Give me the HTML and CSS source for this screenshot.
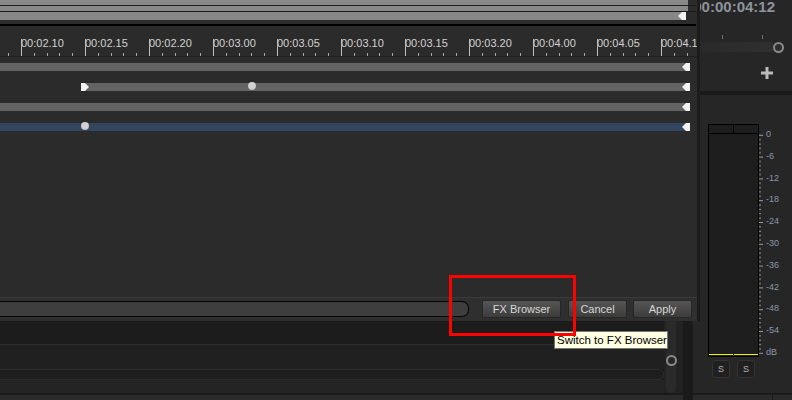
FILE: index.html
```html
<!DOCTYPE html>
<html>
<head>
<meta charset="utf-8">
<link rel="stylesheet" href="styles.css">
</head>
<body>
<div class="app">
  <div class="lanes">
    <div class="lane-a"></div>
    <div class="lane-b"></div>
    <div class="lane-field"></div>
    <div class="lane-d"></div>
    <div class="foot"></div>
  </div>
  <div class="vcol">
    <div class="vtrack"><span class="vknob"></span></div>
    <div class="foot"></div>
  </div>
  <div class="strip"></div>
  <aside class="panel">
    <div class="tc">00:00:04:12</div>
    <div class="sticks"><i></i><i></i></div>
    <div class="strack"><div class="sbar"></div><div class="sknob"></div></div>
    <div class="plusrow">
      <svg width="12" height="12" viewBox="0 0 12 12"><rect x="0" y="4.5" width="12" height="3" fill="#bababa"/><rect x="4.5" y="0" width="3" height="12" fill="#bababa"/></svg>
    </div>
    <div class="pband"></div>
    <div class="meterwrap">
      <div class="meterrow">
        <div class="meter">
          <div class="mhead"><span></span><span></span></div>
          <div class="mbody"><div class="ch"><i></i></div><div class="ch"><i></i></div></div>
        </div>
        <svg class="mticks" width="5" height="233" viewBox="0 0 5 233">
          <defs>
            <pattern id="mt" x="0" y="10.8" width="5" height="21.8" patternUnits="userSpaceOnUse">
              <rect x="0" y="0" width="4" height="1" fill="#9a9a9a"/>
              <rect x="0" y="4.36" width="2" height="1" fill="#9a9a9a"/>
              <rect x="0" y="8.72" width="2" height="1" fill="#9a9a9a"/>
              <rect x="0" y="13.08" width="2" height="1" fill="#9a9a9a"/>
              <rect x="0" y="17.44" width="2" height="1" fill="#9a9a9a"/>
            </pattern>
          </defs>
          <rect x="0" y="8" width="5" height="222" fill="url(#mt)"/>
        </svg>
        <div class="mlabels">
          <span>0</span><span>-6</span><span>-12</span><span>-18</span><span>-24</span><span>-30</span><span>-36</span><span>-42</span><span>-48</span><span>-54</span><span>dB</span>
        </div>
      </div>
      <div class="solo"><button class="sbtn">S</button><button class="sbtn">S</button></div>
    </div>
    <div class="pfoot"></div>
  </aside>
</div>

<div class="dialog">
  <div class="bands">
    <div class="band b5"></div>
    <div class="bline"></div>
    <div class="band b5"></div>
    <div class="bline"></div>
    <div class="band b8">
      <svg class="endmark" width="8" height="8" viewBox="0 0 8 8"><polygon points="0,4 4,0 8,0 8,8 4,8" fill="#f2f2f2"/></svg>
    </div>
    <div class="bgap"></div>
    <div class="bblack"></div>
  </div>
  <div class="ruler">
    <svg class="rticks" width="697" height="30" viewBox="0 0 697 30">
      <defs>
        <pattern id="rt" x="21" y="0" width="64" height="30" patternUnits="userSpaceOnUse">
          <rect x="0" y="13" width="1" height="17" fill="#bdbdbd"/>
          <rect x="13" y="27" width="1" height="3" fill="#a8a8a8"/>
          <rect x="26" y="27" width="1" height="3" fill="#a8a8a8"/>
          <rect x="38" y="27" width="1" height="3" fill="#a8a8a8"/>
          <rect x="51" y="27" width="1" height="3" fill="#a8a8a8"/>
        </pattern>
      </defs>
      <rect x="0" y="0" width="697" height="30" fill="url(#rt)"/>
    </svg>
    <div class="labels">
      <span>00:02.10</span><span>00:02.15</span><span>00:02.20</span><span>00:03.00</span><span>00:03.05</span><span>00:03.10</span><span>00:03.15</span><span>00:03.20</span><span>00:04.00</span><span>00:04.05</span><span>00:04.10</span>
    </div>
  </div>
  <div class="tracks">
    <div class="bar">
      <svg class="endmark" width="8" height="8" viewBox="0 0 8 8"><polygon points="0,4 4,0 8,0 8,8 4,8" fill="#f2f2f2"/></svg>
    </div>
    <div class="bar short">
      <svg class="startmark" width="8" height="8" viewBox="0 0 8 8"><polygon points="0,0 4,0 8,4 4,8 0,8" fill="#f2f2f2"/></svg>
      <span class="kf" style="left:167px"></span>
      <svg class="endmark" width="8" height="8" viewBox="0 0 8 8"><polygon points="0,4 4,0 8,0 8,8 4,8" fill="#f2f2f2"/></svg>
    </div>
    <div class="bar">
      <svg class="endmark" width="8" height="8" viewBox="0 0 8 8"><polygon points="0,4 4,0 8,0 8,8 4,8" fill="#f2f2f2"/></svg>
    </div>
    <div class="bar blue">
      <span class="kf" style="left:81px"></span>
      <svg class="endmark" width="8" height="8" viewBox="0 0 8 8"><polygon points="0,4 4,0 8,0 8,8 4,8" fill="#f2f2f2"/></svg>
    </div>
  </div>
  <div class="bottombar">
    <div class="input"></div>
    <button class="btn fx">FX Browser</button>
    <button class="btn cancel">Cancel</button>
    <button class="btn apply">Apply</button>
  </div>
</div>

<div class="tooltip">Switch to FX Browser</div>
<div class="callout"></div>
</body>
</html>
```

FILE: styles.css
```css
* { box-sizing: border-box; margin: 0; padding: 0; }
html, body { width: 792px; height: 400px; overflow: hidden; }
body {
  background: #1c1c1c;
  font-family: "Liberation Sans", Arial, sans-serif;
  position: relative;
}

/* ---------- application underneath ---------- */
.app { display: flex; width: 792px; height: 400px; }

.lanes { width: 664px; display: flex; flex-direction: column; }
.lane-a { height: 345px; background: #1c1c1c; border-bottom: 1px solid #2e2e2e; }
.lane-b { height: 24px; background: #202020; }
.lane-field {
  height: 11px; background: #1e1e1e;
  border: 1px solid #2c2c2c; border-left: none;
  border-radius: 0 6px 6px 0;
}
.lane-d { height: 13px; background: #242424; }
.foot { height: 7px; background: #2a2a2a; border-top: 2px solid #1a1a1a; }

.vcol { width: 19px; background: #222; display: flex; flex-direction: column; }
.vtrack {
  flex: 1; margin: 0 7px 0 2px; background: #2a2a2a;
  border-radius: 0 0 5px 5px;
  display: flex; flex-direction: column; justify-content: flex-end; align-items: center;
  padding-bottom: 27px;
}
.vknob {
  display: block; width: 11px; height: 11px; border-radius: 50%;
  border: 2.5px solid #8a8a8a; background: #262626;
}
.strip { width: 10px; background: #1a1a1a; }

/* ---------- right panel ---------- */
.panel { width: 99px; background: #262626; display: flex; flex-direction: column; }
.tc {
  height: 33px; text-align: right; padding-right: 17px;
  font-weight: bold; font-size: 15px; line-height: 14px;
  color: #8d939a; white-space: nowrap;
}
.sticks { height: 9px; display: flex; gap: 39px; padding: 2px 0 0 29px; }
.sticks i { display: block; width: 1px; height: 4px; background: #707070; }
.strack { height: 10px; display: flex; align-items: center; }
.sbar { width: 80px; height: 10px; background: linear-gradient(to right, #292929, #303030); }
.sknob {
  width: 11px; height: 11px; border-radius: 50%;
  border: 2.5px solid #8a8a8a; background: #2e2e2e;
}
.plusrow { height: 39px; padding: 15px 0 0 68px; }
.plusrow svg { display: block; }
.pband { height: 4px; background: #1a1a1a; }

.meterwrap { flex: 1; padding: 29px 0 0 15px; display: flex; flex-direction: column; }
.meterrow { display: flex; height: 233px; }
.meter {
  width: 51px; height: 233px; border: 1px solid #000; background: #1e1e1e;
  display: flex; flex-direction: column;
}
.mhead { height: 9px; border-bottom: 1px solid #000; display: flex; }
.mhead span { flex: 1; }
.mhead span:first-child { flex: none; width: 25px; border-right: 1px solid #000; }
.mbody { flex: 1; display: flex; gap: 1px; padding-bottom: 1px; }
.ch { flex: 1; display: flex; flex-direction: column; justify-content: flex-end; }
.ch i { display: block; height: 1px; background: #f0f000; }
.mticks { display: block; }
.mlabels {
  margin-left: 2px; display: flex; flex-direction: column;
  font-size: 9px; line-height: 21.8px; color: #8a97aa;
}
.solo { display: flex; gap: 7px; padding-left: 4px; margin-top: 3px; }
.sbtn {
  width: 18px; height: 18px; border: 1px solid #333; border-radius: 3px;
  background: #202020; color: #b4b4b4;
  font-family: "Liberation Sans", Arial, sans-serif; font-size: 9px;
  display: flex; align-items: center; justify-content: center;
}
.pfoot {
  height: 7px; border-top: 2px solid #1a1a1a;
  background: linear-gradient(to right, #2a2a2a 79px, #1a1a1a 79px 80px, #2a2a2a 80px);
}

/* ---------- floating dialog ---------- */
.dialog {
  position: absolute; left: 0; top: 0;
  width: 700px; height: 321px;
  background: #2b2b2b; border-right: 3px solid #1c1c1c;
  display: flex; flex-direction: column; overflow: hidden;
}
.bands { height: 26px; display: flex; flex-direction: column; }
.band { background: #898989; width: 688px; position: relative; }
.b5 { height: 5px; }
.b8 { height: 8px; width: 686px; background: #878787; }
.bline { height: 1px; width: 696px; background: #1c1c1c; }
.bgap { height: 4px; }
.bblack { height: 2px; width: 696px; background: #000; }

.endmark { position: absolute; right: 0; top: 0; display: block; }
.startmark { position: absolute; left: 0; top: 0; display: block; }

.ruler {
  height: 31px; position: relative; overflow: hidden;
  border-bottom: 1px solid #1f1f1f; padding-top: 11px;
}
.rticks { position: absolute; left: 0; top: 0; display: block; }
.labels {
  display: flex; padding-left: 21px;
  font-size: 11px; line-height: 13px; color: #d2d2d2; white-space: nowrap;
}
.labels span { flex: none; width: 64px; }

.tracks { flex: 1; display: flex; flex-direction: column; gap: 12px; padding-top: 6px; }
.bar { height: 8px; width: 690px; background: #636363; position: relative; flex: none; }
.bar.short { margin-left: 81px; width: 609px; }
.bar.blue { background: #33455f; }
.kf {
  position: absolute; top: -1px; width: 8px; height: 8px; border-radius: 50%;
  background: radial-gradient(circle at 50% 40%, #d2d2d2 0 50%, #b8b8b8 75%, #6a6a6a 100%);
}

.bottombar {
  height: 24px; border-top: 1px solid #3a3a3a; background: #2f2f2f;
  display: flex; align-items: flex-start; padding-top: 2px;
}
.input {
  width: 469px; height: 16px; margin-top: 1px;
  background: #3e3e3e; border: 1px solid #050505; border-left: none;
  border-radius: 0 7px 7px 0;
}
.btn {
  height: 18px; border: 1px solid #272727; border-radius: 2px;
  background: linear-gradient(#555555, #3c3c3c);
  color: #d6d6d6; font-family: "Liberation Sans", Arial, sans-serif; font-size: 11px;
  display: flex; align-items: center; justify-content: center;
}
.fx { width: 79px; margin-left: 13px; }
.cancel { width: 59px; margin-left: 7px; }
.apply { width: 59px; margin-left: 6px; }

/* ---------- overlays ---------- */
.tooltip {
  position: absolute; left: 554px; top: 331px; width: 114px; height: 18px;
  background: #ffffe1; border: 1px solid #767676;
  font-size: 11.5px; line-height: 16px; color: #000; padding-left: 2px; white-space: nowrap;
}
.callout {
  position: absolute; left: 449px; top: 275px; width: 127px; height: 61px;
  border: 3px solid #ff0000;
}
```
